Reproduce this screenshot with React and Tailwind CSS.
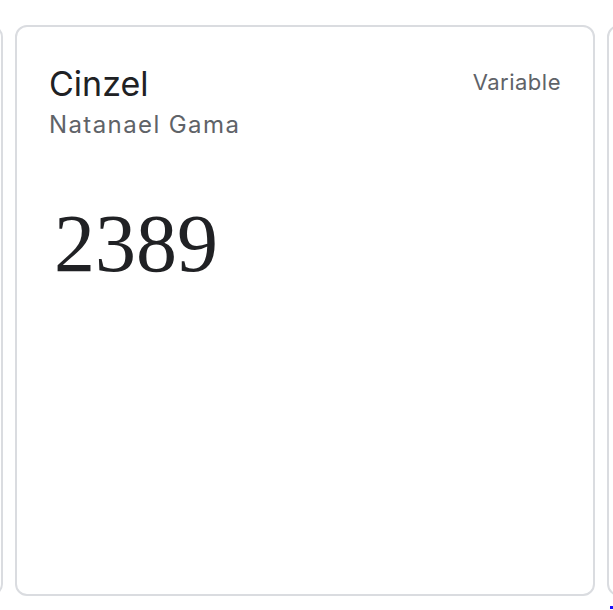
import React from 'react';

const sans = { fontFamily: 'Inter, "Open Sans", sans-serif' };

const fonts = [
    { id: 'prev', name: '', designer: '', tag: '' },
    { id: 'cinzel', name: 'Cinzel', designer: 'Natanael Gama', tag: 'Variable', sample: '2389' },
    { id: 'next', name: '', designer: '', tag: '' },
];

const FontCard = ({ font, className }) => (
    <div
        className={`shrink-0 w-[580px] h-[571px] rounded-[12px] border-2 border-[#dadce0] bg-white pl-[32px] pr-[32px] pt-[37px] ${className || ''}`}
    >
        {font.name && (
            <>
                <div className="flex items-start justify-between" style={sans}>
                    <h2 className="text-[34px] leading-[40px] text-[#202124] font-normal">{font.name}</h2>
                    <span className="mt-[4px] text-[22px] leading-[28px] tracking-[0.5px] text-[#5f6368]">{font.tag}</span>
                </div>
                <p className="mt-[7px] text-[24px] leading-[28px] tracking-[1.4px] text-[#5f6368]" style={sans}>
                    {font.designer}
                </p>
                <div
                    className="mt-[64px] text-[82px] leading-none text-[#202124] font-['Liberation_Serif',serif] ml-[5px]"
                >
                    {font.sample}
                </div>
            </>
        )}
    </div>
);

export default function App() {
    return (
        <div className="relative w-[613px] h-[610px] overflow-hidden bg-white">
            <div className="flex gap-3 pt-[25px]">
                <FontCard font={fonts[0]} className="-ml-[577px]" />
                <FontCard font={fonts[1]} />
                <FontCard font={fonts[2]} />
            </div>
            {/* focus marker */}
            <span className="absolute left-[610px] top-[606px] w-[3px] h-[3px] bg-[#1a0dff]" />
        </div>
    );
}
